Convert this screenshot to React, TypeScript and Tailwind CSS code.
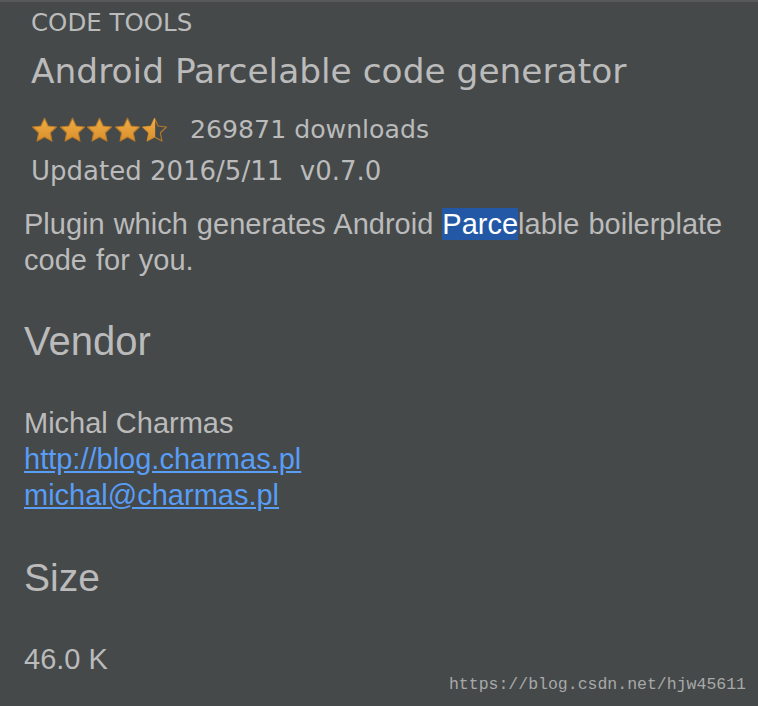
import React from 'react';

const Star = ({ half = false, id }: { half?: boolean; id: string }) => (
  <svg width="27" height="27" viewBox="0 0 24 24" aria-hidden="true">
    <defs>
      <linearGradient id={`g-${id}`} x1="0" y1="0" x2="0" y2="1">
        <stop offset="0%" stopColor="#f0ad45" />
        <stop offset="100%" stopColor="#d98f2c" />
      </linearGradient>
      <clipPath id={`c-${id}`}>
        <rect x="0" y="0" width="12.6" height="24" />
      </clipPath>
    </defs>
    <path
      d="M12 1.2l3.2 6.8 7.4.9-5.4 5.1 1.4 7.4L12 17.8l-6.6 3.6 1.4-7.4-5.4-5.1 7.4-.9z"
      fill={half ? 'none' : `url(#g-${id})`}
      stroke="#b87a2a"
      strokeWidth="1"
      strokeLinejoin="round"
    />
    {half && (
      <path
        d="M12 1.2l3.2 6.8 7.4.9-5.4 5.1 1.4 7.4L12 17.8l-6.6 3.6 1.4-7.4-5.4-5.1 7.4-.9z"
        fill={`url(#g-${id})`}
        clipPath={`url(#c-${id})`}
      />
    )}
  </svg>
);

export default function App() {
  return (
    <div className="relative w-[758px] h-[706px] overflow-hidden bg-[#45494a] text-[#bbbbbb]">
      <div className="h-[2px] bg-[#57595b]" />

      {/* Header */}
      <div className="pl-[31px] pt-[5px] font-['DejaVu_Sans',sans-serif]">
        <div className="text-[24.5px] leading-[32px]">CODE TOOLS</div>
        <div className="mt-[10px] text-[34.4px] leading-[44px]">Android Parcelable code generator</div>
        <div className="mt-[19px] flex items-center h-[36px]">
          <div className="flex gap-[0.5px]">
            <Star id="s1" />
            <Star id="s2" />
            <Star id="s3" />
            <Star id="s4" />
            <Star id="s5" half />
          </div>
          <span className="ml-[22px] text-[25.2px]">269871 downloads</span>
        </div>
        <div className="mt-[5px] text-[26px] leading-[36px] whitespace-pre">Updated 2016/5/11  v0.7.0</div>
      </div>

      {/* Body */}
      <div className="pl-[24px] pr-[20px] mt-[17px] font-['Liberation_Sans',Arial,sans-serif]">
        <p className="text-[29px] leading-[36px] [word-spacing:1px]">
          Plugin which generates Android{' '}
          <span className="bg-[#2258a6] text-white">Parce</span>lable boilerplate code for you.
        </p>

        <h2 className="mt-[40px] text-[40px] leading-[46px]">Vendor</h2>
        <div className="mt-[41px] text-[29px] leading-[36px]">
          <div>Michal Charmas</div>
          <div>
            <a className="text-[#589df6] underline" href="#">http://blog.charmas.pl</a>
          </div>
          <div>
            <a className="text-[#589df6] underline" href="#">michal@charmas.pl</a>
          </div>
        </div>

        <h2 className="mt-[42px] text-[39px] leading-[46px]">Size</h2>
        <div className="mt-[40px] text-[29px] leading-[36px]">46.0 K</div>
      </div>

      {/* Watermark */}
      <div className="absolute right-[12px] bottom-[8px] font-['Liberation_Mono',monospace] text-[16.5px] text-[#c0c0c0] opacity-80">
        https://blog.csdn.net/hjw45611
      </div>
    </div>
  );
}
